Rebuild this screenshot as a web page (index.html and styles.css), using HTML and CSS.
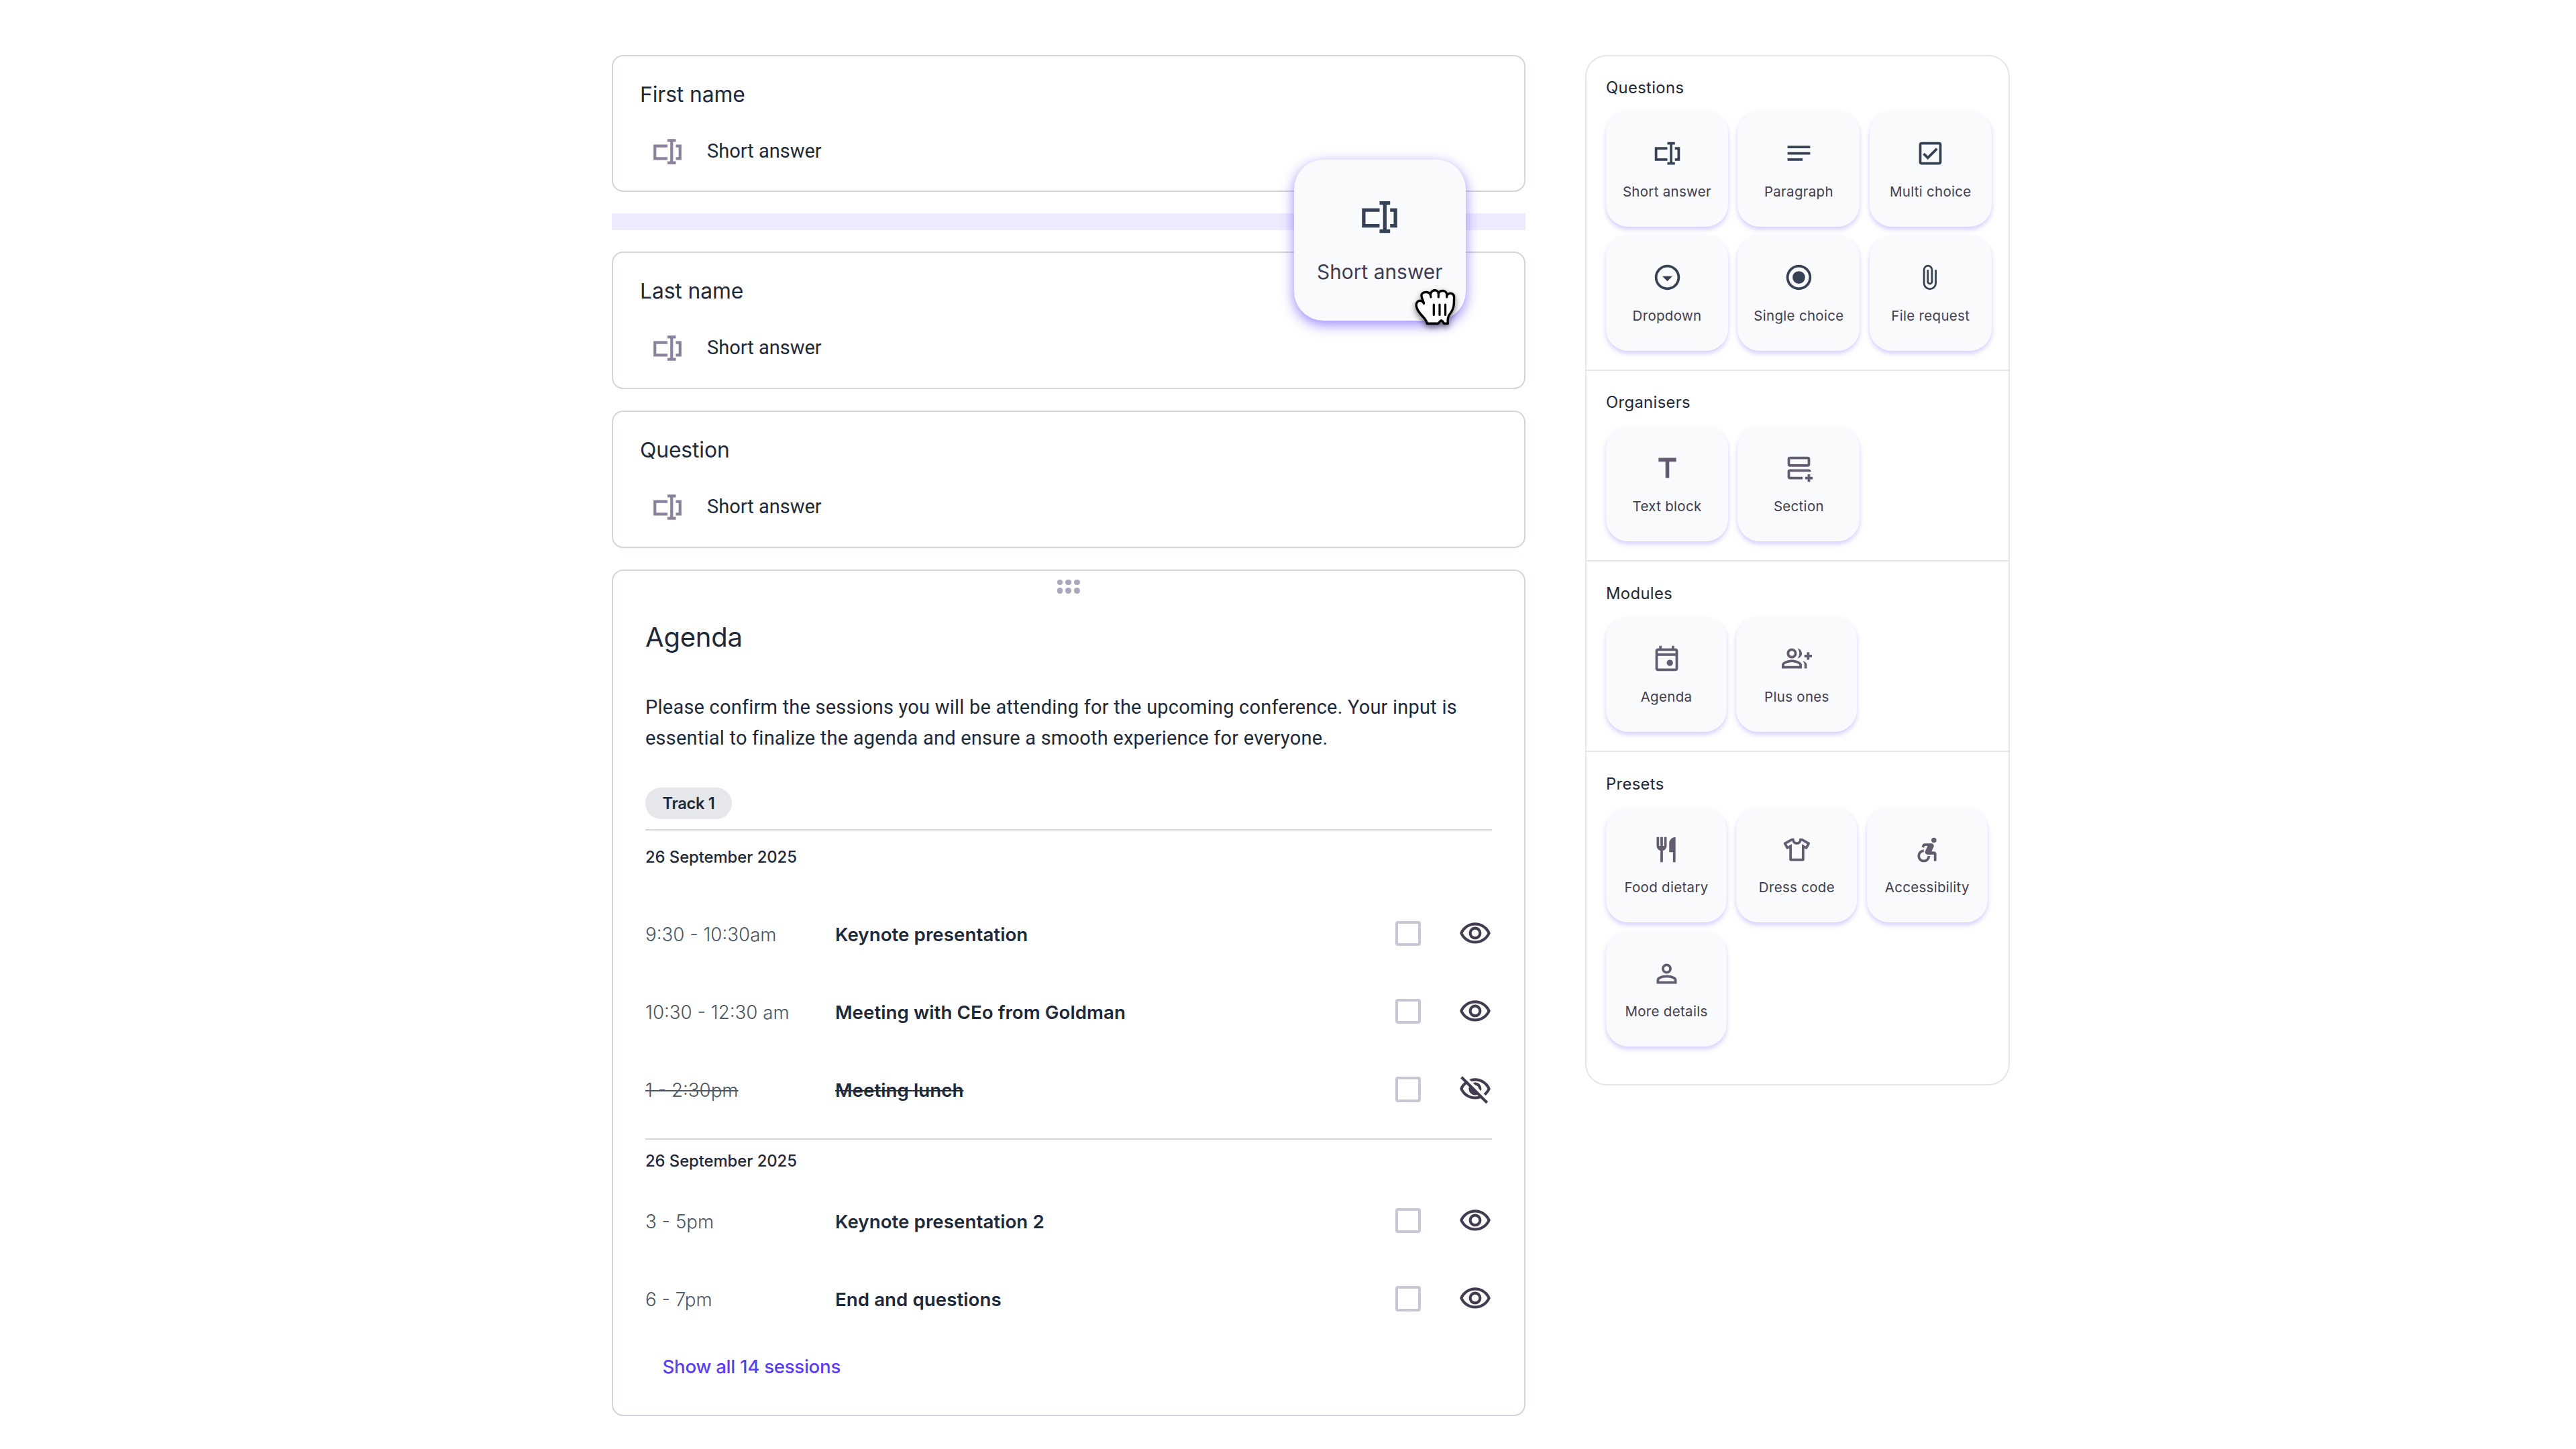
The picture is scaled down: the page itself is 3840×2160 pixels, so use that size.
FILE: index.html
```html
<!DOCTYPE html>
<html lang="en">
<head>
<meta charset="utf-8">
<title>Form builder</title>
<link rel="stylesheet" href="styles.css">
</head>
<body>
<svg class="sprite" aria-hidden="true">
  <symbol id="i-short" viewBox="0 0 24 24"><path d="M12 3h6v2h-2v14h2v2h-6v-2h2V5h-2zM2 7h10v2H4v7h8v2H2zM18 7h4v11h-4v-2h2V9h-2z"/></symbol>
  <symbol id="i-paragraph" viewBox="0 0 24 24"><path d="M3 18h12v-2H3v2zM3 6v2h18V6H3zm0 7h18v-2H3v2z"/></symbol>
  <symbol id="i-check" viewBox="0 0 24 24"><path d="M19 3H5c-1.1 0-2 .9-2 2v14c0 1.1.9 2 2 2h14c1.1 0 2-.9 2-2V5c0-1.1-.9-2-2-2zm0 16H5V5h14v14zM17.99 9l-1.41-1.42-6.59 6.59-2.58-2.57-1.42 1.41 4 3.99z"/></symbol>
  <symbol id="i-dropdown" viewBox="0 0 24 24"><path d="M12 2a10 10 0 1 0 0 20 10 10 0 0 0 0-20zm0 18a8 8 0 1 1 0-16 8 8 0 0 1 0 16zM8 11l4 4 4-4z"/></symbol>
  <symbol id="i-radio" viewBox="0 0 24 24"><path d="M12 2a10 10 0 1 0 0 20 10 10 0 0 0 0-20zm0 18a8 8 0 1 1 0-16 8 8 0 0 1 0 16zM12 7a5 5 0 1 0 0 10 5 5 0 0 0 0-10z"/></symbol>
  <symbol id="i-clip" viewBox="0 0 24 24"><path fill="none" stroke="currentColor" stroke-width="1.5" d="M16.3 6v10.6a4.65 4.65 0 0 1-9.3 0V5.9a3.15 3.15 0 0 1 6.3 0v9.5a1.65 1.65 0 0 1-3.3 0V6"/></symbol>
  <symbol id="i-text" viewBox="0 0 24 24"><path d="M10.5 20V7H5V4h14v3h-5.500v13z"/></symbol>
  <symbol id="i-section" viewBox="0 0 24 24"><path fill="none" stroke="currentColor" stroke-width="2" d="M5 4h14a1 1 0 0 1 1 1v4a1 1 0 0 1-1 1H5a1 1 0 0 1-1-1V5a1 1 0 0 1 1-1zM20.700 15a1 1 0 0 0-1-1H5a1 1 0 0 0-1 1v4a1 1 0 0 0 1 1h10M17 20h6M20 17v6"/></symbol>
  <symbol id="i-agenda" viewBox="0 -960 960 960"><path d="M580-240q-42 0-71-29t-29-71q0-42 29-71t71-29q42 0 71 29t29 71q0 42-29 71t-71 29ZM200-80q-33 0-56.500-23.500T120-160v-560q0-33 23.500-56.500T200-800h40v-80h80v80h320v-80h80v80h40q33 0 56.500 23.500T840-720v560q0 33-23.500 56.500T760-80H200Zm0-80h560v-400H200v400Zm0-480h560v-80H200v80Z"/></symbol>
  <symbol id="i-plus-ones" viewBox="0 0 24 24"><path d="M22 9V7h-2v2h-2v2h2v2h2v-2h2V9zM8 12c2.210 0 4-1.790 4-4s-1.790-4-4-4-4 1.790-4 4 1.790 4 4 4zm0-6c1.100 0 2 .9 2 2s-.9 2-2 2-2-.9-2-2 .9-2 2-2zm0 7c-2.670 0-8 1.340-8 4v3h16v-3c0-2.660-5.330-4-8-4zm6 5H2v-.99C2.200 16.290 5.300 15 8 15s5.800 1.290 6 2v1zM12.510 4.050C13.430 5.110 14 6.490 14 8s-.57 2.890-1.490 3.950C14.470 11.700 16 10.040 16 8s-1.530-3.700-3.490-3.950zm4.020 9.780C17.420 14.660 18 15.700 18 17v3h2v-3c0-1.450-1.590-2.510-3.470-3.170z"/></symbol>
  <symbol id="i-food" viewBox="0 -960 960 960"><path d="M280-80v-366q-51-14-85.500-56T160-600v-280h80v280h40v-280h80v280h40v-280h80v280q0 56-34.500 98T360-446v366h-80Zm400 0v-320H560v-280q0-83 58.500-141.500T760-880v800h-80Z"/></symbol>
  <symbol id="i-dress" viewBox="0 -960 960 960"><path d="m240-522-40 22q-14 8-30 4t-24-18L66-654q-8-14-4-30t18-24l230-132h70q9 0 14.500 5.500T400-820v20q0 33 23.500 56.500T480-720q33 0 56.500-23.500T560-800v-20q0-9 5.500-14.500T580-840h70l230 132q14 8 18 24t-4 30l-80 140q-8 14-23.500 17.500T760-501l-40-20v361q0 17-11.500 28.500T680-120H280q-17 0-28.500-11.500T240-160v-362Zm80-134v456h320v-456l124 68 42-70-172-100q-15 51-56.500 84.500T480-640q-56 0-97.500-33.500T326-758L154-658l42 70 124-68Z"/></symbol>
  <symbol id="i-access" viewBox="0 0 24 24"><circle cx="17.500" cy="4.540" r="2"/><path d="M14.500 17h-2c0 1.650-1.350 3-3 3s-3-1.350-3-3 1.350-3 3-3v-2c-2.760 0-5 2.240-5 5s2.240 5 5 5 5-2.240 5-5zm3-3.500h-1.860l1.670-3.670C17.920 8.500 16.940 7 15.460 7h-5.200c-.81 0-1.540.47-1.870 1.200L7.720 10l1.920.53.65-1.530H12.500l-1.830 4.100c-.6 1.330.39 2.900 1.850 2.900H17.500v5h2v-5.500c0-1.100-.9-2-2-2z"/></symbol>
  <symbol id="i-person" viewBox="0 -960 960 960"><path d="M480-480q-66 0-113-47t-47-113q0-66 47-113t113-47q66 0 113 47t47 113q0 66-47 113t-113 47ZM160-160v-112q0-34 17.500-62.500T224-378q62-31 126-46.500T480-440q66 0 130 15.500T736-378q29 15 46.500 43.500T800-272v112H160Zm80-80h480v-32q0-11-5.500-20T700-306q-54-27-109-40.500T480-360q-56 0-111 13.500T260-306q-9 5-14.500 14t-5.500 20v32Zm240-320q33 0 56.500-23.500T560-640q0-33-23.500-56.500T480-720q-33 0-56.500 23.500T400-640q0 33 23.500 56.500T480-560Z"/></symbol>
  <symbol id="i-eye" viewBox="0 0 24 24"><path d="M12 6c3.790 0 7.170 2.130 8.820 5.500C19.170 14.870 15.790 17 12 17s-7.170-2.130-8.820-5.500C4.830 8.130 8.210 6 12 6m0-2C7 4 2.730 7.110 1 11.500 2.730 15.890 7 19 12 19s9.270-3.110 11-7.500C21.270 7.110 17 4 12 4zm0 5c1.380 0 2.500 1.120 2.500 2.500S13.380 14 12 14s-2.500-1.120-2.500-2.500S10.620 9 12 9m0-2c-2.480 0-4.500 2.020-4.500 4.500S9.520 16 12 16s4.500-2.020 4.500-4.500S14.480 7 12 7z"/></symbol>
  <mask id="m-slash" maskUnits="userSpaceOnUse" x="0" y="0" width="24" height="24"><path fill="#fff" d="M0 0h24v24H0z"/><path stroke="#000" stroke-width="2" d="M2.600 .9 22.800 21.100"/></mask>
  <symbol id="i-eye-off" viewBox="0 0 24 24"><g mask="url(#m-slash)"><path d="M12 6c3.790 0 7.170 2.130 8.820 5.500C19.170 14.870 15.790 17 12 17s-7.170-2.130-8.820-5.500C4.830 8.130 8.210 6 12 6m0-2C7 4 2.730 7.110 1 11.500 2.730 15.890 7 19 12 19s9.270-3.110 11-7.500C21.270 7.110 17 4 12 4zm0 5c1.380 0 2.500 1.120 2.500 2.500S13.380 14 12 14s-2.500-1.120-2.500-2.500S10.620 9 12 9m0-2c-2.480 0-4.500 2.020-4.500 4.500S9.520 16 12 16s4.500-2.020 4.500-4.500S14.480 7 12 7z"/><path d="M8.800 8.300A4.500 4.500 0 1 0 15.200 14.700z"/></g><path stroke="currentColor" stroke-width="2" d="M2.200 3.200 20.500 21.500"/></symbol>
</svg>

<main class="builder">
  <section class="form">
    <article class="card field">
      <h2 class="field-title">First name</h2>
      <div class="field-type"><svg class="field-icon"><use href="#i-short"/></svg><span class="field-label">Short answer</span></div>
    </article>
    <div class="drop-zone">
      <div class="dragged">
        <svg class="dragged-icon"><use href="#i-short"/></svg>
        <span class="dragged-label">Short answer</span>
        <svg class="cursor" viewBox="0 0 80 80">
          <path fill="#fff" stroke="#000" stroke-width="3.400" stroke-linejoin="round" stroke-linecap="round" d="M27.300 62.300C27 57.500 22 53 18 48.500C14 44 11.700 40 11.200 35.500C11 31 13.500 28.300 17 28.200C19.500 28.300 21.500 29.500 22.500 32.300C21 27 18.500 23 19 19.500C20 15.500 28 13.500 32.500 18.500C33 14 37 12.500 39.500 12.700C42 13 44.200 15 44.300 17.500C45.500 14.500 48 13.200 51.500 13.500C55 14 57 17 57 20.500C58 17.500 62 16.500 65 18C67 19.200 67.700 21 67.600 23.500L67.300 33C67 40 64 45 60 50C58 53 57.800 57 58.300 62.300H52.500C51.500 60 50.500 58.500 48.500 57.700C46.500 58.500 45.500 60.300 44 62.300Z"/>
          <path fill="none" stroke="#000" stroke-width="3.200" stroke-linecap="round" d="M22.500 32.300L20.500 27M33 23L32 18M44.300 23V17M56.700 23V19M37.300 34V49.500M46 34V49.500M54.600 34V49.500"/>
        </svg>
      </div>
    </div>
    <article class="card field">
      <h2 class="field-title">Last name</h2>
      <div class="field-type"><svg class="field-icon"><use href="#i-short"/></svg><span class="field-label">Short answer</span></div>
    </article>
    <article class="card field">
      <h2 class="field-title">Question</h2>
      <div class="field-type"><svg class="field-icon"><use href="#i-short"/></svg><span class="field-label">Short answer</span></div>
    </article>
    <article class="card agenda">
      <div class="handle"><i></i><i></i><i></i><i></i><i></i><i></i></div>
      <h1 class="agenda-title">Agenda</h1>
      <p class="agenda-text">Please confirm the sessions you will be attending for the upcoming conference. Your input is<br>essential to finalize the agenda and ensure a smooth experience for everyone.</p>
      <span class="track">Track 1</span>
      <div class="day">
        <h3 class="date">26 September 2025</h3>
        <ul class="sessions">
          <li class="session"><span class="time">9:30 - 10:30am</span><span class="name">Keynote presentation</span><span class="box"></span><svg class="eye"><use href="#i-eye"/></svg></li>
          <li class="session"><span class="time">10:30 - 12:30 am</span><span class="name">Meeting with CEo from Goldman</span><span class="box"></span><svg class="eye"><use href="#i-eye"/></svg></li>
          <li class="session hidden"><span class="time">1 - 2:30pm</span><span class="name">Meeting lunch</span><span class="box"></span><svg class="eye"><use href="#i-eye-off"/></svg></li>
        </ul>
      </div>
      <div class="day day-next">
        <h3 class="date">26 September 2025</h3>
        <ul class="sessions">
          <li class="session"><span class="time">3 - 5pm</span><span class="name">Keynote presentation 2</span><span class="box"></span><svg class="eye"><use href="#i-eye"/></svg></li>
          <li class="session"><span class="time">6 - 7pm</span><span class="name">End and questions</span><span class="box"></span><svg class="eye"><use href="#i-eye"/></svg></li>
        </ul>
      </div>
      <a class="show-all">Show all 14 sessions</a>
    </article>
  </section>

  <aside class="panel">
    <section class="group">
      <h2 class="group-title">Questions</h2>
      <div class="tiles">
        <div class="tile"><svg class="tile-icon"><use href="#i-short"/></svg><span>Short answer</span></div>
        <div class="tile"><svg class="tile-icon"><use href="#i-paragraph"/></svg><span>Paragraph</span></div>
        <div class="tile"><svg class="tile-icon"><use href="#i-check"/></svg><span>Multi choice</span></div>
        <div class="tile"><svg class="tile-icon"><use href="#i-dropdown"/></svg><span>Dropdown</span></div>
        <div class="tile"><svg class="tile-icon"><use href="#i-radio"/></svg><span>Single choice</span></div>
        <div class="tile"><svg class="tile-icon"><use href="#i-clip"/></svg><span>File request</span></div>
      </div>
    </section>
    <section class="group muted">
      <h2 class="group-title">Organisers</h2>
      <div class="tiles">
        <div class="tile"><svg class="tile-icon"><use href="#i-text"/></svg><span>Text block</span></div>
        <div class="tile"><svg class="tile-icon"><use href="#i-section"/></svg><span>Section</span></div>
      </div>
    </section>
    <section class="group muted">
      <h2 class="group-title">Modules</h2>
      <div class="tiles narrow">
        <div class="tile"><svg class="tile-icon"><use href="#i-agenda"/></svg><span>Agenda</span></div>
        <div class="tile"><svg class="tile-icon"><use href="#i-plus-ones"/></svg><span>Plus ones</span></div>
      </div>
    </section>
    <section class="group muted">
      <h2 class="group-title">Presets</h2>
      <div class="tiles narrow">
        <div class="tile"><svg class="tile-icon"><use href="#i-food"/></svg><span>Food dietary</span></div>
        <div class="tile"><svg class="tile-icon"><use href="#i-dress"/></svg><span>Dress code</span></div>
        <div class="tile"><svg class="tile-icon"><use href="#i-access"/></svg><span>Accessibility</span></div>
        <div class="tile"><svg class="tile-icon"><use href="#i-person"/></svg><span>More details</span></div>
      </div>
    </section>
  </aside>
</main>
</body>
</html>
```
FILE: styles.css
```css
* { box-sizing: border-box; margin: 0; padding: 0; }
body { background: #fff; color: #1e2939; font-family: Inter, "Liberation Sans", sans-serif; }
svg { display: block; flex: none; fill: currentColor; }
.sprite { width: 0; height: 0; position: absolute; }
h1, h2, h3 { font-weight: 440; }

.builder { display: flex; align-items: flex-start; gap: 89px; padding: 81.5px 0 0 911.5px; }

/* Form column */
.form { display: flex; flex-direction: column; gap: 32px; width: 1362.5px; }
.card { border: 2px solid #d1d5dc; border-radius: 17px; background: #fff; }
.field { height: 204.8px; padding: 32px 40.500px 0; }
.field-title { font-size: 31.8px; line-height: 50px; letter-spacing: -.1px; }
.field-type { display: flex; align-items: center; gap: 34px; margin: 35px 0 0 16px; height: 50px; }
.field-icon { width: 50px; height: 50px; color: #8a819c; }
.field-label { font: 400 29px/40px Roboto, sans-serif; position: relative; top: -1px; }

.drop-zone { height: 25px; background: #eeebff; position: relative; }
.dragged {
  position: absolute; z-index: 2; left: 1017px; top: -80.500px; width: 256.500px; height: 240.500px;
  display: flex; flex-direction: column; align-items: center; gap: 30.600px; padding-top: 53.800px;
  border-radius: 44px; background: #f9fafc; box-shadow: 0 6px 19px rgba(91, 61, 245, .62);
}
.dragged-icon { width: 63px; height: 63px; color: #364153; }
.dragged-label { font-size: 29.900px; line-height: 40px; color: #433c50; white-space: nowrap; }
.cursor { position: absolute; left: 171.500px; top: 182px; width: 80px; height: 80px; overflow: visible; filter: drop-shadow(0 4px 4px rgba(0, 0, 0, .5)); }

/* Agenda card */
.agenda { display: flex; flex-direction: column; height: 1262.400px; padding: 13px 48.500px 0; }
.handle { align-self: center; display: grid; grid-template-columns: repeat(3, 8.600px); gap: 4px; }
.handle i { width: 8.600px; height: 8.600px; border-radius: 50%; background: #ada5bb; }
.agenda-title { margin-top: 39.600px; font-size: 40px; line-height: 50px; letter-spacing: -.2px; }
.agenda-text { margin-top: 56.500px; font: 400 29px/46px Roboto, sans-serif; letter-spacing: .22px; }
.track {
  align-self: flex-start; margin-top: 50.800px; height: 46.800px; padding: 0 26px 0 25.500px; border-radius: 23.400px;
  background: #e5e7eb; font-size: 23.600px; font-weight: 560; line-height: 47.800px; letter-spacing: -.3px;
}
.day { margin-top: 15.300px; padding-top: 21.600px; border-top: 2px solid #d1d5dc; }
.date { font-size: 23.800px; font-weight: 460; line-height: 36px; letter-spacing: -.05px; }
.sessions { margin-top: 37.800px; list-style: none; }
.day-next { padding-top: 13.700px; }
.day-next .sessions { margin-top: 12.500px; }
.session { display: flex; align-items: center; height: 116.200px; font-size: 27.700px; line-height: 40px; }
.time, .name { position: relative; top: 1.200px; }
.time { width: 283px; color: #4a5565; font-weight: 330; letter-spacing: 0; }
.name { flex: 1; font-weight: 560; letter-spacing: .05px; }
.hidden .time, .hidden .name { text-decoration: line-through; text-decoration-thickness: 2px; }
.box { width: 37.500px; height: 37.500px; border: 4px solid #cac6d3; border-radius: 4px; }
.eye { width: 50px; height: 50px; margin-left: 56px; color: #433c50; }
.show-all { margin: 22.700px 0 0 25.500px; color: #5b3df5; font-size: 27.700px; font-weight: 450; line-height: 40px; letter-spacing: -.3px; }

/* Block palette */
.panel { width: 633px; height: 1536.500px; border: 2px solid #e5e7eb; border-radius: 32px; background: #fff; }
.group { padding: 31.700px 0 27.800px 29px; }
.group + .group { border-top: 2px solid #e5e7eb; }
.group-title { font-size: 23.800px; line-height: 32px; letter-spacing: .35px; }
.tiles { display: grid; grid-template-columns: repeat(3, 182px); gap: 13.700px 14.400px; margin-top: 19.100px; }
.narrow { grid-template-columns: repeat(3, 180px); }
.tile {
  display: flex; flex-direction: column; align-items: center; gap: 20.500px; height: 171.500px; padding-top: 39.800px;
  border-radius: 33px; background: #f9fafc; box-shadow: 0 4px 7px rgba(91, 61, 245, .26);
  color: #433c50; font-size: 20.500px; line-height: 28px; letter-spacing: .3px; white-space: nowrap;
}
.tile-icon { width: 45px; height: 45px; color: #364153; }
.muted .tile-icon { color: #635b70; }
```
